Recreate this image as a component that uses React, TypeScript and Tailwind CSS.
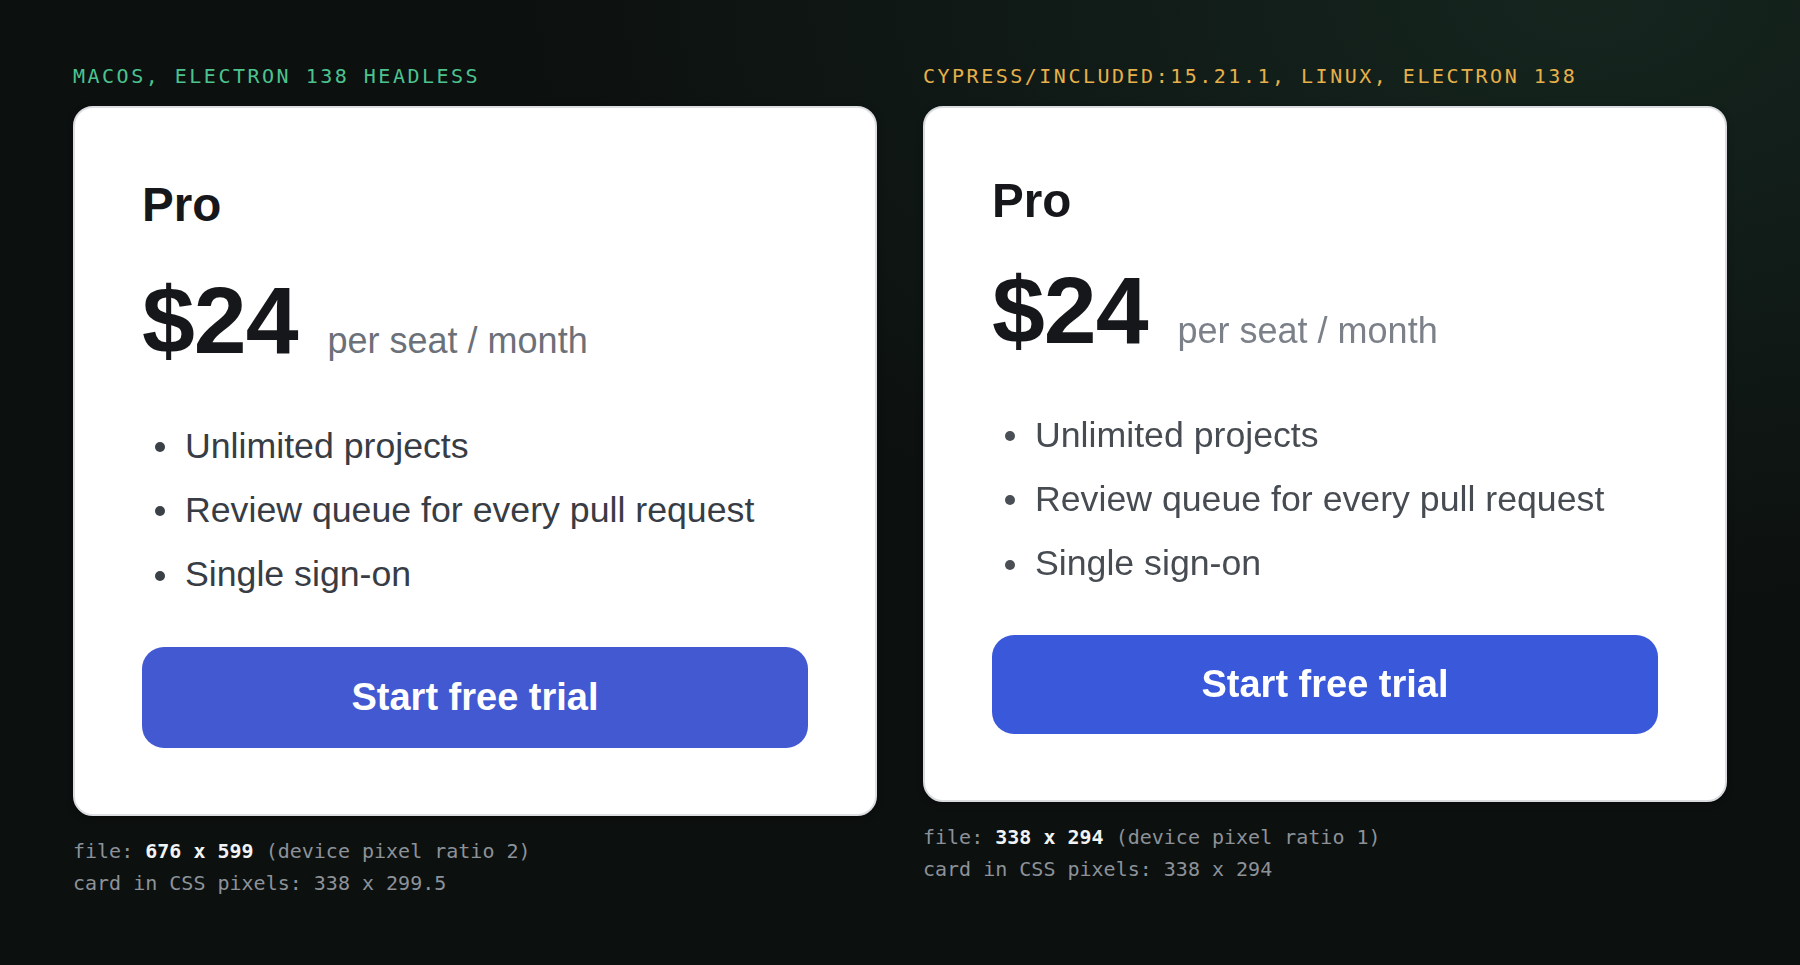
import React from "react";

type Variant = "mac" | "linux";

const features = [
  "Unlimited projects",
  "Review queue for every pull request",
  "Single sign-on",
];

function Card({ v }: { v: Variant }) {
  const mac = v === "mac";
  return (
    <div
      className={
        "w-[804px] rounded-[20px] border-[2px] bg-white px-[67px] pb-[66px] shadow-[0_2px_6px_rgba(0,0,0,0.35)] " +
        (mac ? "border-[#dcdee2] pt-[67px]" : "border-[#d9dbde] pt-[63px]")
      }
      style={{ fontFamily: '"Liberation Sans", Arial, sans-serif' }}
    >
      <div className={mac ? "" : "blur-[0.5px]"}>
        <h2 className="text-[47.6px] font-bold leading-[59.5px] text-[#16171a]">Pro</h2>
        <div className={"flex items-baseline " + (mac ? "mt-[38px]" : "mt-[32px]")}>
          <span className="text-[95px] font-bold leading-[95px] tracking-[-1px] text-[#16171a]">$24</span>
          <span
            className={
              "ml-[30px] text-[36px] leading-[53px] " + (mac ? "text-[#6b7079]" : "text-[#7b8089]")
            }
          >
            per seat / month
          </span>
        </div>
        <ul className={mac ? "mt-[46px]" : "mt-[45px]"}>
          {features.map((f) => (
            <li
              key={f}
              className={
                "flex items-center pl-[13px] text-[35.7px] leading-[64.3px] " +
                (mac ? "text-[#383c44]" : "text-[#474b52]")
              }
            >
              <span
                className={
                  "mr-[20px] mt-[3px] inline-block h-[10px] w-[10px] shrink-0 rounded-full " +
                  (mac ? "bg-[#3b3f46]" : "bg-[#4a4e55]")
                }
              />
              {f}
            </li>
          ))}
        </ul>
        <button
          className={
            "flex w-full items-center justify-center rounded-[22px] text-[38px] font-bold text-white " +
            (mac ? "mt-[41px] h-[101px] bg-[#4259d1]" : "mt-[40px] h-[99px] bg-[#3a58da]")
          }
          style={{ fontFamily: '"Liberation Sans", Arial, sans-serif' }}
        >
          Start free trial
        </button>
      </div>
    </div>
  );
}

function Column({
  label,
  labelColor,
  v,
  file,
  dpr,
  css,
}: {
  label: string;
  labelColor: string;
  v: Variant;
  file: string;
  dpr: string;
  css: string;
}) {
  return (
    <div className="flex w-[804px] flex-col">
      <div
        className={"h-[28px] text-[20px] uppercase leading-[28px] tracking-[2.5px] " + labelColor}
        style={{ fontFamily: '"DejaVu Sans Mono", "Liberation Mono", monospace' }}
      >
        {label}
      </div>
      <div className="mt-[16px]">
        <Card v={v} />
      </div>
      <div
        className="mt-[19px] text-[20px] leading-[32px] text-[#8d9299]"
        style={{ fontFamily: '"DejaVu Sans Mono", "Liberation Mono", monospace' }}
      >
        <div>
          file: <span className="font-semibold text-[#f2f3f4]">{file}</span> (device pixel ratio {dpr})
        </div>
        <div>card in CSS pixels: {css}</div>
      </div>
    </div>
  );
}

export default function App() {
  return (
    <div className="flex h-[965px] w-full justify-center gap-[46px] bg-[#0c100f] bg-[radial-gradient(ellipse_75%_80%_at_88%_0%,#15251e_0%,#101a16_40%,#0c100f_80%)] pt-[62px]">
      <Column
        label="macOS, Electron 138 headless"
        labelColor="text-[#4cc38f]"
        v="mac"
        file="676 x 599"
        dpr="2"
        css="338 x 299.5"
      />
      <Column
        label="cypress/included:15.21.1, Linux, Electron 138"
        labelColor="text-[#e6b04a]"
        v="linux"
        file="338 x 294"
        dpr="1"
        css="338 x 294"
      />
    </div>
  );
}
